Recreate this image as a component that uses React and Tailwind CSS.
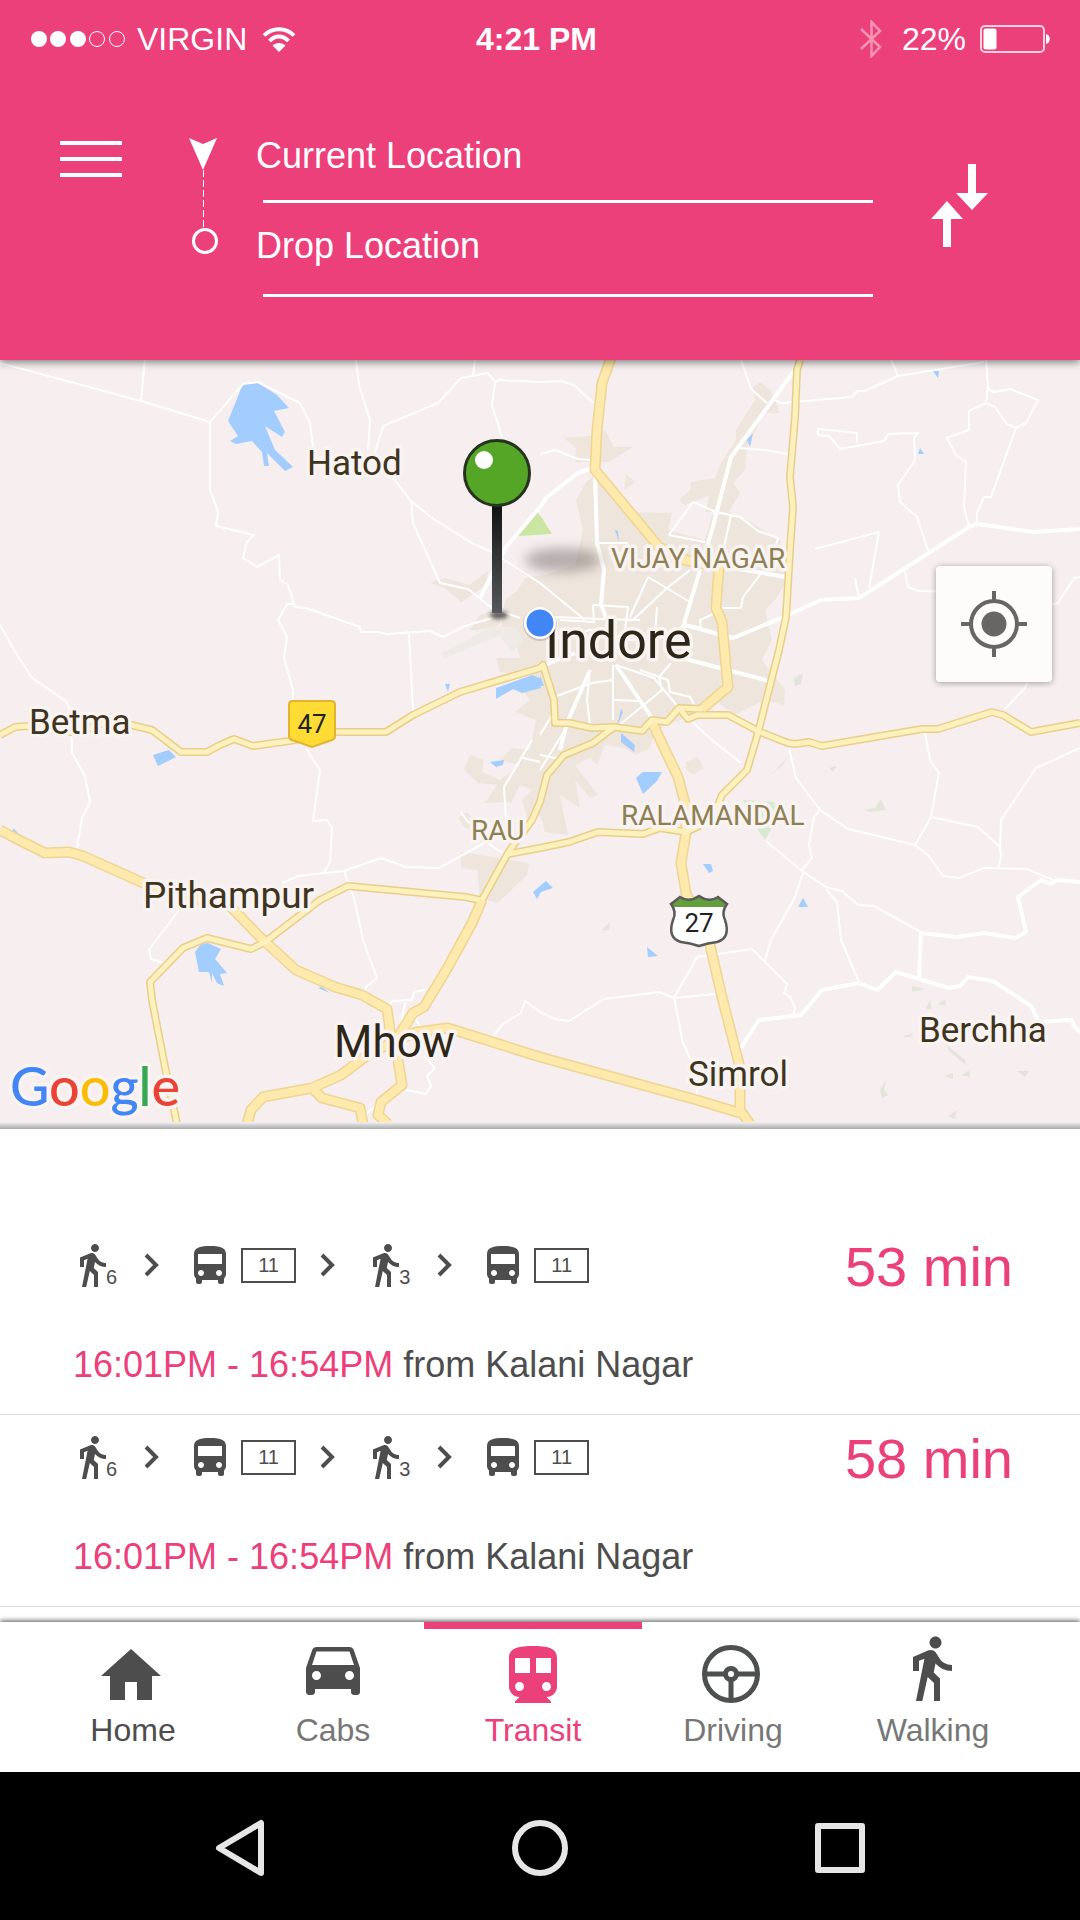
import React from "react";

const WALK =
  "M13.5 5.5c1.1 0 2-.9 2-2s-.9-2-2-2-2 .9-2 2 .9 2 2 2zM9.8 8.9L7 23h2.1l1.8-8 2.1 2v6h2v-7.5l-2.1-2 .6-3C14.8 12 16.8 13 19 13v-2c-1.9 0-3.5-1-4.3-2.4l-1-1.6c-.4-.6-1-1-1.7-1-.3 0-.5.1-.8.1L6 8.3V13h2V9.6l1.8-.7";
const BUS =
  "M4 16c0 .88.39 1.67 1 2.22V20c0 .55.45 1 1 1h1c.55 0 1-.45 1-1v-1h8v1c0 .55.45 1 1 1h1c.55 0 1-.45 1-1v-1.78c.61-.55 1-1.34 1-2.22V6c0-3.5-3.58-4-8-4s-8 .5-8 4v10zm3.5 1c-.83 0-1.5-.67-1.5-1.5S6.67 14 7.5 14s1.5.67 1.5 1.5S8.33 17 7.5 17zm9 0c-.83 0-1.5-.67-1.5-1.5s.67-1.5 1.5-1.5 1.5.67 1.5 1.5-.67 1.5-1.5 1.5zm1.5-6H6V6h12v5z";
const CAR =
  "M18.92 6.01C18.72 5.42 18.16 5 17.5 5h-11c-.66 0-1.21.42-1.42 1.01L3 12v8c0 .55.45 1 1 1h1c.55 0 1-.45 1-1v-1h12v1c0 .55.45 1 1 1h1c.55 0 1-.45 1-1v-8l-2.08-5.99zM6.5 16c-.83 0-1.5-.67-1.5-1.5S5.67 13 6.5 13s1.5.67 1.5 1.5S7.33 16 6.5 16zm11 0c-.83 0-1.5-.67-1.5-1.5s.67-1.5 1.5-1.5 1.5.67 1.5 1.5-.67 1.5-1.5 1.5zM5 11l1.5-4.500h11L19 11H5z";
const TRAIN =
  "M12 2c-4.42 0-8 .5-8 4v9.5C4 17.43 5.57 19 7.5 19L6 20.5v.5h12v-.5L16.5 19c1.93 0 3.5-1.57 3.5-3.5V6c0-3.5-3.58-4-8-4zM7.5 17c-.83 0-1.5-.67-1.5-1.5S6.67 14 7.5 14s1.5.67 1.5 1.5S8.33 17 7.5 17zm3.5-6H6V6h5v5zm5.5 6c-.83 0-1.5-.67-1.5-1.5s.67-1.5 1.5-1.5 1.5.67 1.5 1.5-.67 1.5-1.5 1.5zm1.5-6h-5V6h5v5z";
const HOME = "M10 20v-6h4v6h5v-8h3L12 3 2 12h3v8z";

function StatusBar() {
  return (
    <div className="grid h-[78px] grid-cols-[1fr_auto_1fr] items-center pl-[31px] pr-[30px] text-[32px] leading-10">
      <div className="flex items-center">
        <svg width="95" height="18" viewBox="0 0 95 18" fill="#fff" aria-hidden="true">
          <circle cx="8" cy="9" r="8" />
          <circle cx="27" cy="9" r="8" />
          <circle cx="47" cy="9" r="8" />
          <g fill="none" stroke="#fff">
            <circle cx="66" cy="9" r="7.5" />
            <circle cx="86" cy="9" r="7.5" />
          </g>
        </svg>
        <span className="ml-[11px]">VIRGIN</span>
        <svg className="ml-[15px]" width="34" height="26" viewBox="0 0 34 26" fill="none" stroke="#fff" strokeWidth="4" aria-hidden="true">
          <path d="M2 9.5C10 1 24 1 32 9.500" />
          <path d="M7.500 15C13 9 21 9 26.500 15" />
          <path d="M10.500 19.500C14 16 20 16 23.500 19.500L17 26z" fill="#fff" stroke="none" />
        </svg>
      </div>
      <span className="mr-2 font-bold">4:21 PM</span>
      <div className="flex items-center justify-end">
        <svg width="22" height="38" viewBox="0 0 22 38" fill="none" stroke="#f794b4" strokeWidth="2.500" aria-hidden="true">
          <path d="M1 9L20 27L11.500 36V2L20 11L1 29" />
        </svg>
        <span className="ml-5">22%</span>
        <svg className="ml-[14px]" width="70" height="28" viewBox="0 0 70 28" aria-hidden="true">
          <rect x="1" y="1" width="63" height="26" rx="4" fill="none" stroke="#fcd0de" strokeWidth="2" />
          <rect x="3.500" y="3.500" width="13" height="21" rx="2" fill="#fff" />
          <path d="M66 9c5 1 5 9 0 10z" fill="#fff" />
        </svg>
      </div>
    </div>
  );
}

function Field({ id, label, gap }) {
  return (
    <div className="flex flex-col">
      <input
        id={id}
        type="text"
        aria-label={label}
        placeholder={label}
        className="block h-12 w-full bg-transparent text-4xl leading-[48px] text-white outline-none placeholder:text-white placeholder:opacity-100"
      />
      <div className={gap + " ml-[7px] h-[3px] bg-white"} />
    </div>
  );
}

function Header() {
  return (
    <header className="relative z-10 bg-[#ec407a] text-white shadow-[0_2px_8px_rgba(0,0,0,0.5)]">
      <StatusBar />
      <div className="flex items-start pb-[63px] pl-[60px] pr-[92px] pt-[50px]">
        <button type="button" aria-label="Menu" className="mt-[13px] flex w-[62px] shrink-0 flex-col gap-3">
          <span className="h-1 w-full bg-white" />
          <span className="h-1 w-full bg-white" />
          <span className="h-1 w-full bg-white" />
        </button>
        <svg className="ml-[66px] mt-[10px] shrink-0" width="32" height="118" viewBox="188 138 32 118" aria-hidden="true">
          <path d="M189 138L203 144L217 138L203 170z" fill="#fff" />
          <path d="M203.500 170V228" stroke="#fff" strokeDasharray="7 3" />
          <circle cx="205" cy="241" r="11.500" fill="none" stroke="#fff" strokeWidth="3" />
        </svg>
        <div className="ml-9 mt-1 flex min-w-0 flex-1 flex-col gap-[19px]">
          <Field id="from" label="Current Location" gap="mt-5" />
          <Field id="to" label="Drop Location" gap="mt-6" />
        </div>
        <button type="button" aria-label="Swap locations" className="ml-[57px] mt-9 shrink-0">
          <svg className="block" width="58" height="84" viewBox="0 0 58 84" fill="#fff" aria-hidden="true">
            <path d="M38 0h8v29h12L42 46L26 29h12z" />
            <path d="M13 83h8V55h12L17 37L1 55h12z" />
          </svg>
        </button>
      </div>
    </header>
  );
}

const minorRoads = [
  "0,363 141,401 210,422 243,384 258,382 300,403 310,423 313,447",
  "145,360 141,400",
  "210,422 210,490 218,512 216,526 254,535 247,542 243,558 257,567 279,555 280,580 288,585 295,607 306,608 360,627 361,632 377,632 387,634 430,631 443,637 465,626 492,618",
  "295,604 287,604 278,620 287,637 284,658 293,690 293,702",
  "409,634 413,712",
  "356,360 359,385 370,420 368,450",
  "375,452 383,426 438,403 461,378 488,373 495,382 492,405 502,437",
  "473,375 475,360",
  "495,382 499,380 540,382 561,381 574,385 593,403",
  "540,454 555,450 578,459 592,460",
  "393,478 410,500 432,518 472,543 492,552 540,583 585,620",
  "411,500 413,523 440,583 468,589 492,608 520,618",
  "0,625 14,650 32,678 67,702 71,713 72,753 85,776 90,802 82,818 77,848",
  "306,748 320,770 313,821 327,820 332,828 330,862 324,873",
  "282,883 298,876 344,871 381,858 406,867 439,868 486,842 503,853",
  "344,871 354,898 363,940 377,978 366,987 364,995",
  "179,910 149,950 151,959 164,963",
  "386,1010 392,1001 412,1000 414,992 425,990",
  "405,1003 400,1030",
  "415,1018 421,1028 450,1026",
  "424,1056 435,1068 427,1076 431,1086 426,1094 406,1090",
  "366,1114 378,1104",
  "492,1037 503,1024 521,1013 525,1001 540,1012 555,1019 569,1021 604,999 659,992 674,998 716,994",
  "674,998 697,957 752,949 787,984 784,993 790,997 795,1008 793,1015",
  "674,998 683,1043 697,1073 697,1097",
  "766,841 802,871 826,887 842,891 858,905 874,906 921,932",
  "826,889 837,902 841,940 859,982",
  "765,961 771,940 795,897 803,873",
  "802,870 812,858 809,845 814,817 820,810",
  "789,748 796,778 820,810 848,829 915,845 928,855 943,876 959,878 984,868 1027,869 1053,880",
  "915,845 931,817 939,773 930,760 925,733",
  "931,817 978,827 1000,847 1001,857 998,868",
  "1000,847 1001,820 1036,768 1080,748",
  "692,722 712,740 741,763",
  "815,549 879,532 869,588",
  "859,598 855,578",
  "929,553 917,517 900,502 898,485 915,460 914,438 918,433 888,434 884,441 840,449 829,436 818,435 818,429 857,433 857,443",
  "969,527 964,507 966,462 956,455 947,438 969,430 969,411 986,403 988,387 986,360",
  "988,389 994,392 1010,389 1038,400 1026,423 1016,428 1007,424 995,407 986,403",
  "1016,428 991,497 984,497 977,513 977,524",
  "775,400 781,403 852,397 857,391 865,391 898,376 984,362",
  "891,360 898,376",
  "741,360 751,389 767,403",
  "740,448 765,450 788,454",
  "905,572 908,587 919,591 1005,593 1046,606 1058,603 1074,578 1080,577",
  "1046,606 1036,660 1025,688 1005,709",
  "693,502 669,535 705,542",
  "693,502 716,512 740,517 758,531 778,538 775,548",
  "731,515 724,547",
  "597,543 627,543 632,550",
  "648,577 690,602",
  "648,577 630,617",
  "690,570 667,588 633,620",
  "760,575 743,597 741,608 722,608",
  "593,605 628,607 625,630",
  "555,617 601,619 640,620",
  "657,607 655,635",
  "722,610 700,620 701,627 680,627",
  "550,640 590,630 630,640 680,636",
  "593,605 594,622 560,620",
  "616,665 654,678 679,708",
  "671,663 659,677 662,690 617,727",
  "613,665 613,720",
  "554,697 592,683 613,680",
  "590,670 587,700 590,725",
  "613,700 640,701",
  "640,670 668,680 670,692 690,697 697,710",
  "532,740 504,787 506,820",
  "523,758 540,762",
  "569,723 560,738 540,770",
  "461,812 468,822 478,824",
  "540,735 552,715",
  "540,755 565,760",
];

const whiteRoads = [
  "480,598 506,547 540,507 547,497 578,473 592,468",
  "595,473 597,543 604,570 601,605 607,620",
  "738,1052 759,1020 801,1015 822,990 859,983 877,990 896,972 949,988 960,986 968,977 993,981 1031,1006 1039,1022 1072,1020 1074,1026 1080,1032",
  "919,978 921,933 957,937 984,933 1015,938 1026,932 1018,897 1041,880 1050,884 1057,880 1080,882",
  "685,625 733,638 786,616 821,600 859,598 969,527 977,524 1034,532 1080,529",
  "797,367 731,457 712,530 683,627",
  "678,657 769,681",
  "733,568 786,577",
  "540,667 575,653",
  "616,665 652,718",
  "590,670 567,723 560,750",
];

const yellowRoads = [
  "0,735 15,727 28,726 78,733 100,724 127,724 152,730 181,752 207,752 220,745 234,739 253,746 289,741 336,732 386,732 413,715 460,692 540,668 543,665 554,700 555,723 569,723 592,728 614,727 642,731 652,720 667,722 679,708 702,709",
  "800,360 797,370 795,417 790,477 793,507 790,550 786,617 779,650 767,697 758,733 747,770 722,795 712,820 686,832 660,828 643,834 598,832 569,842 540,848 508,854",
  "679,708 688,719 697,715 728,715 760,732 788,743 795,744 809,742 822,746 922,729 938,729 992,712 1003,715 1031,732 1080,723",
  "614,727 593,743 564,755 547,775 540,802 532,820 517,840 508,853 482,900",
  "480,900 465,897 348,886 320,900 265,942 251,949 207,938 183,948 150,982 152,1000 165,1067 177,1124",
];

const highways = [
  "702,709 728,687 726,667 722,622 716,608 719,567",
  "719,567 685,560 659,547 595,470 597,430 602,383 611,358",
  "482,900 472,923 448,967 424,1007 413,1013 396,1040 365,1057 341,1075 312,1088 263,1097 251,1110 247,1124",
  "312,1088 322,1098 360,1108 363,1124",
  "652,722 665,750 678,777 686,807 686,833 681,863 686,893 710,945 721,993 736,1052 740,1068 740,1110 750,1124",
  "396,1040 417,1032 448,1028 540,1057 697,1100 740,1113",
  "0,830 15,838 45,853 69,852 83,856 141,882 179,898 207,900 227,903 260,937 296,970 335,987 362,995 387,1009 391,1037 398,1060 402,1085 381,1102 378,1115 388,1124",
];

const urban = [
  "595,475 612,500 628,512 672,513 668,530 705,540 712,515 730,512 755,525 780,540 788,580 775,600 765,610 772,640 762,660 785,690 784,705 765,700 735,715 715,700 680,720 655,730 650,748 636,755 625,748 605,745 597,765 590,758 575,765 598,795 590,798 575,780 580,808 560,795 568,835 545,832 540,815 528,820 522,800 532,790 520,785 512,802 485,803 497,785 478,783 464,770 470,755 484,760 482,772 500,780 520,765 500,760 512,748 530,750 536,720 515,712 530,700 522,690 534,676 500,672 496,658 520,658 515,640 500,635 505,600 518,590 525,578 545,575 575,565 583,530 576,500 586,482",
  "760,382 770,390 775,400 780,413 764,413 747,447 745,470 733,483 740,493 729,512 705,512 710,495 685,505 679,500 690,490 691,482 715,478 721,463 736,440 736,430 755,400 753,387",
  "564,438 590,436 605,430 614,447 633,447 609,462 575,462 576,448",
  "626,474 635,482 624,490",
  "461,852 529,863 527,875 498,903 480,898 477,870 461,868",
  "430,583 445,578 470,585 489,570 485,586 461,602 445,588",
  "470,630 480,615 500,608 500,625 480,630",
  "458,818 468,812 478,830 465,828",
  "686,762 698,757 703,768 694,775 686,770",
  "771,775 787,757 783,765",
  "545,800 556,798 557,810",
];

const water = [
  "243,384 258,383 277,395 289,408 274,411 285,432 282,437 265,426 275,450 293,467 285,471 267,453 269,466 264,466 262,452 252,441 236,444 230,441 238,436 228,421",
  "208,943 221,949 215,959 227,973 220,974 224,986 217,983 212,973 212,983 209,972 199,972 195,952 201,944",
  "153,755 169,750 176,757 158,766",
  "496,688 532,675 540,678 541,688 522,693 513,689 496,699",
  "540,675 544,686 540,686",
  "636,778 643,772 662,772 657,781 643,794",
  "621,733 635,745 634,752 621,742",
  "621,709 623,712 617,726",
  "703,864 711,864 713,871 709,873",
  "803,898 808,907 798,907",
  "647,947 658,956 648,957",
  "533,892 546,881 553,888 541,892 537,899",
  "490,762 504,760 503,765 496,767",
  "13,828 21,836 13,834",
  "318,988 322,987 330,993",
  "933,371 939,371 938,378",
  "920,448 924,454 918,454",
  "753,433 750,447 747,440",
  "445,684 450,684 448,692",
  "615,530 618,531 619,542",
];

const hills = [
  "864,810 875,808 881,799 886,810 870,812",
  "829,768 837,766 833,772",
  "601,931 610,922 609,930",
  "912,986 925,989 912,992",
  "930,1000 932,1009 926,1009",
  "938,1004 945,1000 946,1006",
  "945,1044 965,1060 966,1065 950,1052",
  "902,1037 913,1033 910,1037",
  "944,1076 953,1073 953,1079",
  "961,1075 970,1070 970,1077",
  "1017,1071 1029,1071 1025,1077",
  "880,1090 886,1080 884,1090 889,1095 882,1098",
  "948,1116 957,1110 955,1119",
  "794,678 803,673 801,684 795,686",
];

const halo = { paintOrder: "stroke", stroke: "#f9f3f2", strokeWidth: 7, strokeLinejoin: "round" };

const places = [
  { name: "Hatod", x: 307, y: 475, size: 35, fill: "#3f341d" },
  { name: "Betma", x: 29, y: 734, size: 35, fill: "#3f341d" },
  { name: "Pithampur", x: 143, y: 908, size: 37, fill: "#3f341d" },
  { name: "Simrol", x: 688, y: 1086, size: 35, fill: "#3f341d" },
  { name: "Berchha", x: 919, y: 1042, size: 35, fill: "#3f341d" },
  { name: "Mhow", x: 334, y: 1057, size: 44, fill: "#2e2618" },
  { name: "Indore", x: 545, y: 658, size: 52, fill: "#2e2618" },
  { name: "VIJAY NAGAR", x: 611, y: 568, size: 28, fill: "#8f7f55" },
  { name: "RALAMANDAL", x: 621, y: 825, size: 28, fill: "#8f7f55" },
  { name: "RAU", x: 471, y: 840, size: 28, fill: "#8f7f55" },
];

function Lines({ roads, stroke, width }) {
  return (
    <g fill="none" stroke={stroke} strokeWidth={width} strokeLinejoin="round">
      {roads.map((points) => (
        <polyline key={points} points={points} />
      ))}
    </g>
  );
}

function Areas({ shapes, fill }) {
  return (
    <g fill={fill}>
      {shapes.map((points) => (
        <polygon key={points} points={points} />
      ))}
    </g>
  );
}

function Map() {
  return (
    <section aria-label="Map" className="relative bg-[#f6eeef]">
      <svg className="block h-auto w-full" viewBox="0 360 1080 762" fontFamily="Roboto, sans-serif">
        <defs>
          <linearGradient id="stem" x1="0" y1="0" x2="0" y2="1">
            <stop offset="0" stopColor="#111" />
            <stop offset="1" stopColor="#565a5d" />
          </linearGradient>
          <filter id="soft" x="-50%" y="-100%" width="200%" height="300%">
            <feGaussianBlur stdDeviation="6" />
          </filter>
          <filter id="tip" x="-50%" y="-100%" width="200%" height="300%">
            <feGaussianBlur stdDeviation="2" />
          </filter>
        </defs>
        <Areas shapes={urban} fill="#eee6dd" />
        <Areas shapes={["442,653 492,627 516,627 523,640 513,652 499,636 444,658"]} fill="#eeebe6" />
        <Areas shapes={["518,536 537,512 542,518 552,534"]} fill="#cbe6a3" />
        <Areas shapes={["743,800 774,802 778,817 765,840 752,822"]} fill="#d5ead0" />
        <Areas shapes={hills} fill="#e3e5da" />
        <Areas shapes={water} fill="#a3cdff" />
        <Lines roads={minorRoads} stroke="#fff" width={2} />
        <Lines roads={whiteRoads} stroke="#fff" width={4} />
        <Lines roads={highways} stroke="#edd592" width={11} />
        <Lines roads={yellowRoads} stroke="#e8cf88" width={8} />
        <Lines roads={highways} stroke="#ffe9ac" width={8} />
        <Lines roads={yellowRoads} stroke="#fff1bd" width={5} />

        {places.map((p) => (
          <text key={p.name} x={p.x} y={p.y} fontSize={p.size} fill={p.fill} style={halo}>
            {p.name}
          </text>
        ))}

        <path d="M293 701h38q4 0 4 4v31q0 3-3 4l-20 7l-20-7q-3-1-3-4v-31q0-4 4-4z" fill="#ffdc35" stroke="#e2b32e" strokeWidth="2" />
        <text x="312" y="733" fontSize="26" textAnchor="middle" fill="#222">47</text>

        <path
          d="M671 904L680 897Q689 903 699 896Q709 903 718 897L727 904Q721 912 725 920Q731 938 717 942Q708 943 699 946Q690 943 681 942Q667 938 673 920Q677 912 671 904z"
          fill="#fff"
        />
        <path d="M671 904L680 897Q689 903 699 896Q709 903 718 897L727 904L725 907H673z" fill="#649f3e" />
        <path
          d="M671 904L680 897Q689 903 699 896Q709 903 718 897L727 904Q721 912 725 920Q731 938 717 942Q708 943 699 946Q690 943 681 942Q667 938 673 920Q677 912 671 904z"
          fill="none"
          stroke="#5a5a5a"
          strokeWidth="2.500"
        />
        <text x="699" y="932" fontSize="26" textAnchor="middle" fill="#222">27</text>

        <ellipse cx="563" cy="560" rx="38" ry="12" fill="#6b6460" opacity="0.45" filter="url(#soft)" />
        <ellipse cx="499" cy="615" rx="9" ry="4" fill="#222" opacity="0.7" filter="url(#tip)" />
        <rect x="492" y="503" width="10" height="110" fill="url(#stem)" />
        <circle cx="497" cy="473" r="32.500" fill="#55a626" stroke="#26331f" strokeWidth="3" />
        <circle cx="484" cy="460" r="9" fill="#fff" />
        <circle cx="540" cy="624" r="17" fill="#000" opacity="0.15" />
        <circle cx="540" cy="623" r="16" fill="#fff" />
        <circle cx="540" cy="623" r="13.500" fill="#4285f4" />

        <text x="10" y="1106" fontSize="54" fontFamily="Lato, sans-serif" fontWeight="500" style={halo}>
          <tspan fill="#4285f4">G</tspan>
          <tspan fill="#ea4335">o</tspan>
          <tspan fill="#fbbc05">o</tspan>
          <tspan fill="#4285f4">g</tspan>
          <tspan fill="#34a853">l</tspan>
          <tspan fill="#ea4335">e</tspan>
        </text>
      </svg>
      <button
        type="button"
        aria-label="My location"
        className="absolute right-7 top-[206px] flex size-[116px] items-center justify-center rounded bg-[#fdfcfb]/95 shadow-[0_1px_6px_rgba(0,0,0,0.35)]"
      >
        <svg width="66" height="66" viewBox="0 0 66 66" fill="none" stroke="#666" strokeWidth="4" aria-hidden="true">
          <circle cx="33" cy="33" r="23" />
          <circle cx="33" cy="33" r="12.500" fill="#666" stroke="none" />
          <path d="M33 0v9M33 57v9M0 33h9M57 33h9" />
        </svg>
      </button>
    </section>
  );
}

function Chevron() {
  return (
    <svg width="15" height="24" viewBox="0 0 15 24" fill="none" stroke="#4d4d4d" strokeWidth="4" aria-hidden="true">
      <path d="M2 2L12 12L2 22" />
    </svg>
  );
}

function Walk({ minutes }) {
  return (
    <div className="flex items-end text-[#4d4d4d]">
      <svg width="26" height="44" viewBox="6 1 13 22" fill="currentColor" aria-hidden="true">
        <path d={WALK} />
      </svg>
      <span className="text-xl leading-5">{minutes}</span>
    </div>
  );
}

function Bus({ line }) {
  return (
    <div className="flex items-center gap-[15px] text-[#4d4d4d]">
      <svg width="32" height="38" viewBox="4 2 16 19" fill="currentColor" aria-hidden="true">
        <path d={BUS} />
      </svg>
      <span className="flex h-[35px] w-[55px] items-center justify-center border-2 border-[#4d4d4d] text-xl leading-6">{line}</span>
    </div>
  );
}

function Trip({ duration }) {
  return (
    <li className="border-b border-[#dedede] pb-[29px] pl-[73px] pr-[67px] pt-3">
      <div className="flex items-center justify-between">
        <div className="flex items-center pb-1 pl-[7px]">
          <div className="flex items-center gap-[27px]">
            <Walk minutes="6" />
            <Chevron />
          </div>
          <div className="ml-[35px] flex items-center gap-6">
            <Bus line="11" />
            <Chevron />
          </div>
          <div className="ml-[38px] flex items-center gap-[27px]">
            <Walk minutes="3" />
            <Chevron />
          </div>
          <div className="ml-[35px]">
            <Bus line="11" />
          </div>
        </div>
        <span className="whitespace-nowrap text-[56px] leading-[64px] text-[#ec407a]">{duration}</span>
      </div>
      <p className="mt-[46px] text-4xl leading-10 text-[#4d4d4d]">
        <span className="text-[#ec407a]">16:01PM - 16:54PM</span> from Kalani Nagar
      </p>
    </li>
  );
}

function TabIcon({ children }) {
  return (
    <svg width="72" height="80" viewBox="0 0 72 80" fill="currentColor" aria-hidden="true">
      {children}
    </svg>
  );
}

function Tab({ label, active, tone, icon, children }) {
  return (
    <a href="#" aria-current={active ? "page" : undefined} className={"relative flex flex-col items-center pb-6 pt-[10px] " + icon}>
      {active && <span className="absolute -inset-x-[9px] top-0 h-[7px] bg-[#ec407a]" />}
      <TabIcon>{children}</TabIcon>
      <span className={"text-[32px] leading-9 " + tone}>{label}</span>
    </a>
  );
}

function TabBar() {
  return (
    <nav
      aria-label="Travel modes"
      className="relative grid grid-cols-5 bg-white pl-[33px] pr-[47px] shadow-[0_-1px_5px_rgba(0,0,0,0.7)]"
    >
      <Tab label="Home" icon="text-[#4d4d4d]" tone="text-[#4d4d4d]">
        <path transform="translate(-2 8) scale(3)" d={HOME} />
      </Tab>
      <Tab label="Cabs" icon="text-[#4d4d4d]" tone="text-[#777]">
        <path transform="scale(3)" d={CAR} />
      </Tab>
      <Tab label="Transit" active icon="text-[#ec407a]" tone="text-[#ec407a]">
        <path transform="translate(0 8) scale(3)" d={TRAIN} />
      </Tab>
      <Tab label="Driving" icon="text-[#4d4d4d]" tone="text-[#777]">
        <g fill="none" stroke="#4d504f" strokeWidth="5">
          <circle cx="34" cy="42" r="26.500" />
          <circle cx="34" cy="42" r="5.500" />
          <path d="M8 42H28M40 42H60M34 48V68" />
        </g>
      </Tab>
      <Tab label="Walking" icon="text-[#4d4d4d]" tone="text-[#777]">
        <path transform="translate(-2 0) scale(3)" d={WALK} />
      </Tab>
    </nav>
  );
}

function SystemBar() {
  return (
    <div className="relative grid h-[148px] grid-cols-3 items-center justify-items-center bg-black px-[90px] pb-1 pt-2">
      <button type="button" aria-label="Back">
        <svg className="block" width="50" height="58" viewBox="0 0 50 58" fill="none" stroke="#e6e6e6" strokeWidth="6" strokeLinejoin="round" aria-hidden="true">
          <path d="M46 4V54L4 29z" />
        </svg>
      </button>
      <button type="button" aria-label="Home screen">
        <svg className="block" width="56" height="56" viewBox="0 0 56 56" fill="none" stroke="#e6e6e6" strokeWidth="6" aria-hidden="true">
          <circle cx="28" cy="28" r="25" />
        </svg>
      </button>
      <button type="button" aria-label="Recent apps">
        <svg className="block" width="50" height="50" viewBox="0 0 50 50" fill="none" stroke="#e6e6e6" strokeWidth="6" strokeLinejoin="round" aria-hidden="true">
          <rect x="3" y="3" width="44" height="44" />
        </svg>
      </button>
    </div>
  );
}

export default function App() {
  return (
    <div className="min-h-screen bg-white font-['Liberation_Sans',Arial,sans-serif]">
      <Header />
      <main>
        <Map />
        <div className="h-[7px] bg-linear-to-b from-[#f4f2f2] to-[#ababab]" />
        <ul className="pb-[15px] pt-[94px]">
          <Trip duration="53 min" />
          <Trip duration="58 min" />
        </ul>
      </main>
      <TabBar />
      <SystemBar />
    </div>
  );
}
